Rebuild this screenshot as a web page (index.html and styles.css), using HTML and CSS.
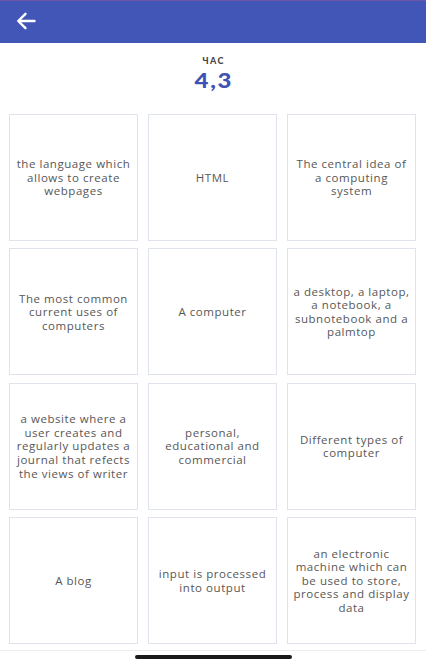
FILE: index.html
```html
<!DOCTYPE html>
<html>
<head>
<meta charset="utf-8">
<link rel="stylesheet" href="styles.css">
</head>
<body>
<div class="app">
  <header class="topbar">
    <svg class="back" width="20" height="18" viewBox="0 0 20 18">
      <path d="M18.5 9H2.5M9.5 1.8L2.2 9l7.3 7.2" fill="none" stroke="#fff" stroke-width="2.4" stroke-linecap="round" stroke-linejoin="round"/>
    </svg>
  </header>
  <div class="score">
    <div class="label">ЧАС</div>
    <div class="value">4,3</div>
  </div>
  <main class="grid">
    <div class="card">the language which allows to create webpages</div>
    <div class="card">HTML</div>
    <div class="card">The central idea of a computing system</div>
    <div class="card">The most common current uses of computers</div>
    <div class="card">A computer</div>
    <div class="card">a desktop, a laptop, a notebook, a subnotebook and a palmtop</div>
    <div class="card">a website where a user creates and regularly updates a journal that refects the views of writer</div>
    <div class="card">personal, educational and commercial</div>
    <div class="card">Different types of computer</div>
    <div class="card">A blog</div>
    <div class="card">input is processed into output</div>
    <div class="card">an electronic machine which can be used to store, process and display data</div>
  </main>
  <footer class="bottom">
    <div class="home"></div>
  </footer>
</div>
</body>
</html>
```
FILE: styles.css
```css
* { box-sizing: border-box; }
html, body { margin: 0; padding: 0; background: #fff; }
body { font-family: "Open Sans", Lato, sans-serif; width: 426px; height: 665px; overflow: hidden; }
.app { display: flex; flex-direction: column; height: 665px; }
.topbar {
  height: 43px;
  background: #4156b7;
  border-top: 1px solid #6a55a8;
  display: flex;
  align-items: center;
  padding-left: 16px;
  flex-shrink: 0;
}
.back { display: block; margin-top: -3px; }
.score {
  display: flex;
  flex-direction: column;
  align-items: center;
  padding-top: 12px;
  height: 71px;
}
.label {
  font-family: Lato, sans-serif;
  font-size: 9px;
  font-weight: 900;
  letter-spacing: 1.3px;
  color: #444;
  line-height: 11px;
  padding-left: 1.3px;
}
.value {
  font-family: Lato, sans-serif;
  font-size: 20px;
  font-weight: 900;
  letter-spacing: 1.5px;
  padding-left: 1.5px;
  color: #3f52b5;
  line-height: 22px;
  margin-top: 3px;
  transform: scaleX(1.2);
}
.grid {
  display: grid;
  grid-template-columns: repeat(3, 129px);
  grid-auto-rows: 127px;
  column-gap: 10px;
  row-gap: 7.4px;
  padding: 0 9px;
}
.card {
  border: 1.5px solid #dfe3ee;
  display: flex;
  align-items: center;
  justify-content: center;
  text-align: center;
  padding: 0 5px;
  font-size: 11.5px;
  line-height: 13.6px;
  color: #575757;
  letter-spacing: 0.55px;
}
.bottom {
  margin-top: auto;
  height: 15px;
  border-top: 1px solid #eceef3;
  display: flex;
  justify-content: center;
  padding-top: 4px;
}
.home {
  width: 157px;
  height: 4px;
  border-radius: 2px;
  background: #1a1a1a;
}
```
